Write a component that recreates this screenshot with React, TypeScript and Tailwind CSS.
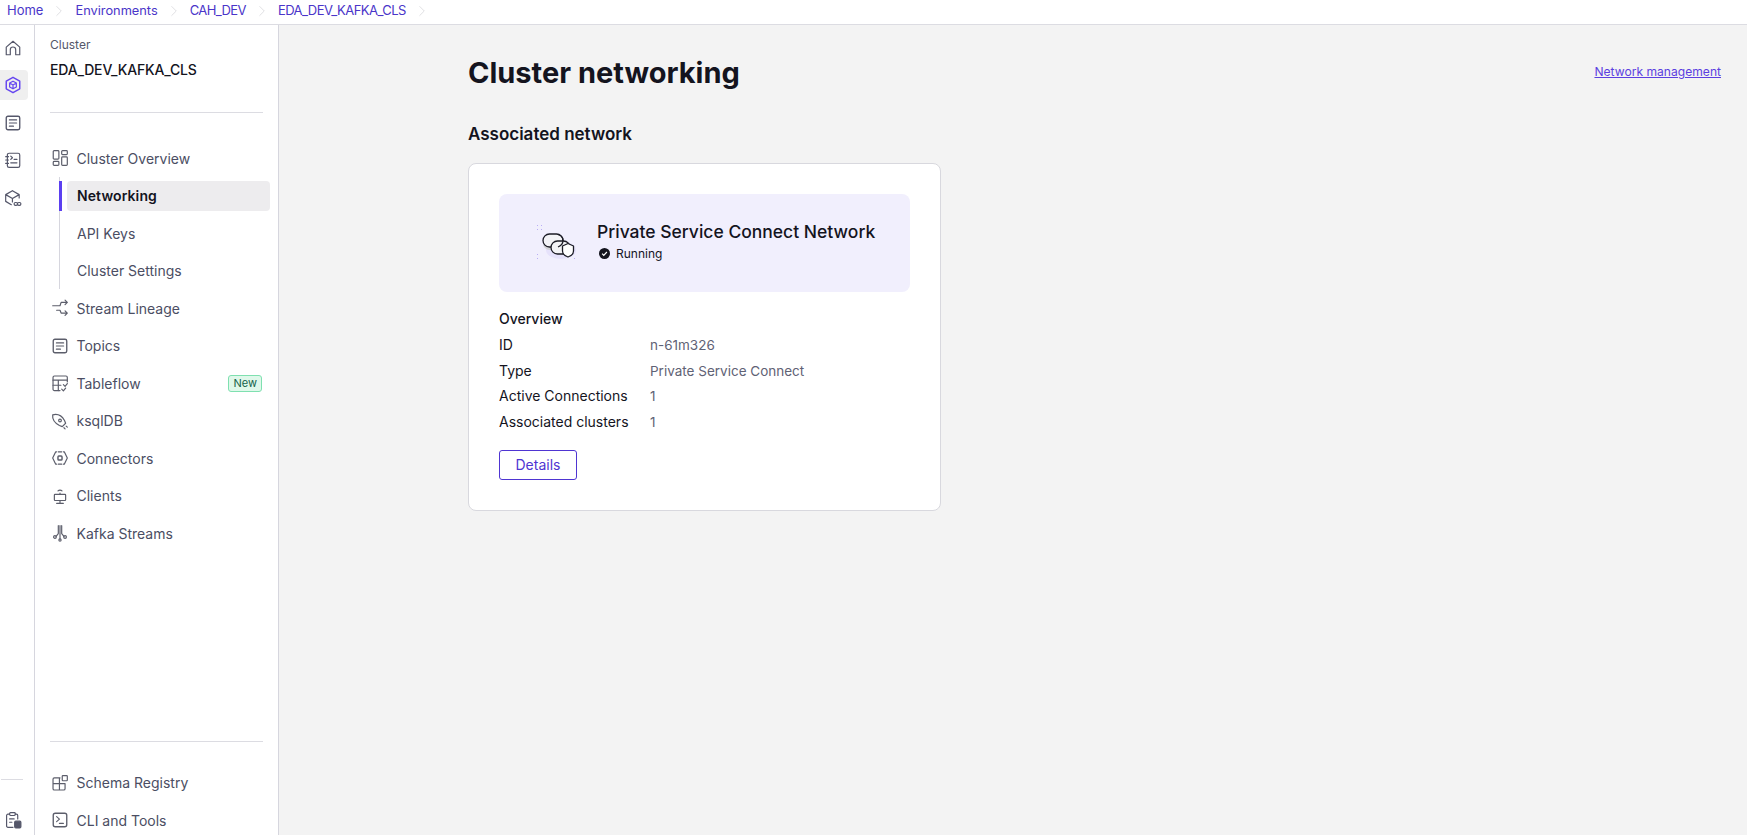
import { ChevronRight } from 'lucide-react';
import type { ReactNode } from 'react';

const Icon = ({ children }: { children: ReactNode }) => (
  <svg viewBox="0 0 16 16" fill="none" stroke="currentColor" strokeWidth="1.05" strokeLinecap="round" strokeLinejoin="round" className="h-[18px] w-[18px]">
    {children}
  </svg>
);

const icons = {
  home: <path d="M2 7.2 8 2l6 5.2V14h-3.6V9.5a2.4 2.4 0 0 0-4.8 0V14H2z" />,
  cluster: (
    <>
      <path d="M8 1.200 14 4.600v6.800L8 14.800 2 11.400V4.600z" strokeWidth="1.300" />
      <path d="M8 4.600 11 6.300v3.400L8 11.400 5 9.700V6.300zM5 6.300 8 8l3-1.700M8 8v3.400" />
    </>
  ),
  doc: (
    <>
      <rect x="2" y="2" width="12" height="12" rx="1.500" strokeWidth="1.200" />
      <path d="M4.800 5.300h6.400M4.800 8h6.400M4.800 10.800h3.600" />
    </>
  ),
  notebook: (
    <>
      <rect x="3" y="2" width="11" height="12.500" rx="1.500" />
      <path d="M1.500 5h2.500M1.500 8h2.500M1.500 11h2.500M6 4.500 7.500 6 6 7.500M6 10.500h5.500M9 7.500h2.500" />
    </>
  ),
  boxLink: (
    <>
      <path d="M7.500 1.500 13.500 5v3M7.500 1.500 1.500 5v6l5 3M1.500 5l6 3.500L13.500 5M7.500 8.500v3" />
      <rect x="9" y="12" width="3" height="2.500" rx="1.200" />
      <rect x="12" y="12" width="3" height="2.500" rx="1.200" />
    </>
  ),
  overview: (
    <>
      <rect x="2" y="1.500" width="5" height="7.500" rx="0.800" />
      <rect x="2" y="11" width="5" height="3.500" rx="0.800" />
      <rect x="9.500" y="1.500" width="5" height="3.500" rx="0.800" />
      <rect x="9.500" y="7" width="5" height="7.500" rx="0.800" />
    </>
  ),
  lineage: (
    <>
      <path d="M1.500 6h6.500l1-3h5.500M12.500 1l2 2-2 2" />
      <path d="M5 10h3l1 2.500h5.500M12.500 10.500l2 2-2 2" />
    </>
  ),
  table: (
    <>
      <path d="M14.500 7V3a1.200 1.200 0 0 0-1.200-1.200H3A1.200 1.200 0 0 0 1.800 3v10.500A1.200 1.200 0 0 0 3 14.700h5" />
      <path d="M1.800 5.500h12.700M1.800 10h7M6.500 5.500v9.200M9.500 13.500l1.500 1.500 2-2.500M11 9.500l1.500 1.500 2-2.500" />
    </>
  ),
  rocket: (
    <>
      <path d="M1.500 2.500c4-1 8 .5 10.500 5l1 2.500-3 3-2.500-1C3 9.500 1 6.500 1.500 2.500z" />
      <circle cx="8" cy="7.500" r="1.200" />
      <path d="M13.500 12.500l1 1M11.500 14l1 1" />
    </>
  ),
  connector: (
    <>
      <path d="M5 2.500H4.200L1.500 8l2.700 5.500H5M11 2.500h.800L14.500 8l-2.700 5.500H11M6.500 2.500h3M6.500 13.500h3" />
      <rect x="6.200" y="6.200" width="3.600" height="3.600" rx="0.800" strokeWidth="1.300" />
    </>
  ),
  client: (
    <>
      <rect x="3" y="6.500" width="10" height="5.500" rx="0.600" />
      <path d="M8 12v2.500M5 14.500h6M6.200 3.500a2.500 2.500 0 0 1 3.600 0M8 5.500v1" />
    </>
  ),
  streams: (
    <>
      <path d="M6.500 1.500v7L4.500 11M8 1.500V13M9.500 1.500v7l2 2.500" />
      <circle cx="3.500" cy="11.500" r="1.200" />
      <circle cx="12.500" cy="11.500" r="1.200" />
      <circle cx="8" cy="14.200" r="1" />
    </>
  ),
  schema: (
    <>
      <path d="M8 3.500H3A1.200 1.200 0 0 0 1.800 4.700V13A1.200 1.200 0 0 0 3 14.200h8.300a1.200 1.200 0 0 0 1.200-1.200V8.500H1.800M7.500 3.500v10.700" />
      <rect x="10" y="1.500" width="4.500" height="4.500" rx="0.600" />
    </>
  ),
  cli: (
    <>
      <rect x="2" y="2" width="12" height="12" rx="1.800" strokeWidth="1.200" />
      <path d="M5 5l2.500 2.200L5 9.400M7.500 11h3.500" />
    </>
  ),
  clipboard: (
    <>
      <path d="M8 14.500H3.500A1.200 1.200 0 0 1 2.300 13.300V4A1.200 1.200 0 0 1 3.500 2.800H5M10 2.800h1A1.200 1.200 0 0 1 12.200 4v3" />
      <rect x="5" y="1.500" width="5" height="2.500" rx="0.800" />
      <path d="M5 7h4M5 10h2" />
      <rect x="9.500" y="9" width="5.500" height="6" rx="1" fill="currentColor" />
    </>
  ),
};

function NavRow({ icon, label, badge }: { icon: ReactNode; label: string; badge?: string }) {
  return (
    <div className="flex h-[30px] items-center text-[14px] text-[#4b4e63]">
      <span className="flex w-[26.5px] pl-[0.5px] text-[#5c5e6b]">
        <Icon>{icon}</Icon>
      </span>
      <span>{label}</span>
      {badge && (
        <span className="ml-auto mr-[1px] rounded-[3px] border border-[#7fe0b0] bg-[#dff8ea] px-[4px] text-[11px] leading-[15px] text-[#14634a]">
          {badge}
        </span>
      )}
    </div>
  );
}

const crumbs = [
  { label: 'Home', cls: 'text-[13px]' },
  { label: 'Environments', cls: 'text-[12.8px]' },
  { label: 'CAH_DEV', cls: 'text-[13px] tracking-[-0.6px]' },
  { label: 'EDA_DEV_KAFKA_CLS', cls: 'text-[13px] tracking-[-0.55px]' },
];

const railIcons = [icons.home, icons.cluster, icons.doc, icons.notebook, icons.boxLink];

const overview = [
  ['ID', 'n-61m326'],
  ['Type', 'Private Service Connect'],
  ['Active Connections', '1'],
  ['Associated clusters', '1'],
];

export default function App() {
  return (
    <div className="flex h-[835px] w-full flex-col overflow-hidden bg-white font-['Inter',sans-serif]">
      <nav className="flex h-[25px] shrink-0 items-center border-b border-[#dcdce2] pb-[2px] pl-[7px] text-[#4a35c9]">
        {crumbs.map((c) => (
          <div key={c.label} className="flex items-center">
            <span className={c.cls}>{c.label}</span>
            <ChevronRight className="mx-[7px] h-[18px] w-[18px] text-[#dcdce0]" strokeWidth={1.2} />
          </div>
        ))}
      </nav>

      <div className="flex min-h-0 flex-1">
        {/* icon rail */}
        <aside className="flex w-[35px] shrink-0 flex-col border-r border-[#d6d6de] text-[#55576a]">
          <div className="flex flex-col gap-[7.5px] pt-[7.5px]">
            {railIcons.map((ic, i) => (
              <div key={i} className={`flex h-[30px] w-[28px] items-center justify-center rounded-r-[4px] pr-[3px] ${i === 1 ? 'bg-[#efefef] text-[#6647f0]' : ''}`}>
                <Icon>{ic}</Icon>
              </div>
            ))}
          </div>
          <div className="mt-auto">
            <div className="ml-[1px] h-px w-[22px] bg-[#dcdce2]" />
            <div className="mt-[25px] flex h-[30px] w-[25px] items-center justify-center">
              <Icon>{icons.clipboard}</Icon>
            </div>
          </div>
        </aside>

        {/* cluster sidebar */}
        <aside className="flex w-[244px] shrink-0 flex-col border-r border-[#d6d6de] px-[15px]">
          <div className="pt-[12px] text-[12px] leading-[16px] text-[#55576a]">Cluster</div>
          <div className="mt-[7px] text-[14px] font-medium leading-[20px] tracking-[-0.18px] text-[#14141e]">EDA_DEV_KAFKA_CLS</div>
          <div className="mt-[32px] h-px bg-[#dcdce2]" />

          <div className="mt-[30px] flex flex-col gap-[7.5px]">
            <NavRow icon={icons.overview} label="Cluster Overview" />
            <div className="relative -mb-[3.5px] -mr-[7px] ml-[9px] -mt-[3.5px] flex flex-col gap-[7.5px] border-l border-[#d6d6de] py-[3.5px] pl-[7px]">
              <div className="absolute left-[-1px] top-[3.5px] h-[30px] w-[3px] bg-[#5b3ff0]" />
              <div className="flex h-[30px] items-center rounded-[4px] bg-[#edecee] pl-[10px] text-[14px] font-semibold tracking-[0.1px] text-[#14141e]">Networking</div>
              <div className="flex h-[30px] items-center pl-[10px] text-[14px] text-[#4b4e63]">API Keys</div>
              <div className="flex h-[30px] items-center pl-[10px] text-[14px] text-[#4b4e63]">Cluster Settings</div>
            </div>
            <NavRow icon={icons.lineage} label="Stream Lineage" />
            <NavRow icon={icons.doc} label="Topics" />
            <NavRow icon={icons.table} label="Tableflow" badge="New" />
            <NavRow icon={icons.rocket} label="ksqlDB" />
            <NavRow icon={icons.connector} label="Connectors" />
            <NavRow icon={icons.client} label="Clients" />
            <NavRow icon={icons.streams} label="Kafka Streams" />
          </div>

          <div className="mt-auto">
            <div className="h-px bg-[#dcdce2]" />
            <div className="mt-[26px] flex flex-col gap-[7.5px]">
              <NavRow icon={icons.schema} label="Schema Registry" />
              <NavRow icon={icons.cli} label="CLI and Tools" />
            </div>
          </div>
        </aside>

        {/* main */}
        <main className="min-w-0 flex-1 bg-[#f3f3f3] pl-[189px] pr-[26px]">
          <div className="flex items-center justify-between pt-[28px]">
            <h1 className="text-[29px] font-bold leading-[40px] text-[#14141e]">Cluster networking</h1>
            <a className="-translate-y-px text-[12.1px] text-[#5b3fe0] underline">Network management</a>
          </div>

          <h2 className="mt-[29px] text-[17px] font-semibold leading-[24px] text-[#14141e]">Associated network</h2>

          <section className="mt-[17px] w-[473px] rounded-[8px] border border-[#d8d8de] bg-white px-[30px] pb-[30px] pt-[30px]">
            <div className="flex h-[98px] items-center rounded-[8px] bg-[#f1effd] pl-[34px]">
              <svg viewBox="0 0 44 40" className="h-[40px] w-[44px]" fill="none">
                <ellipse cx="28" cy="27" rx="15" ry="9" fill="#e6e2fb" />
                <g fill="#b9adf5">
                  <rect x="4" y="2" width="1" height="1" />
                  <rect x="8" y="2" width="1" height="1" />
                  <rect x="4" y="6" width="1" height="1" />
                  <rect x="8" y="6" width="1" height="1" />
                  <rect x="4" y="31" width="1" height="1" />
                  <rect x="4" y="35" width="1" height="1" />
                  <rect x="41" y="35" width="1" height="1" />
                </g>
                <rect x="10" y="14" width="20" height="13" rx="6.5" fill="#d2d2d6" />
                <rect x="10" y="11" width="20" height="13" rx="6.5" fill="#f3f3f6" stroke="#1c1c26" strokeWidth="1.3" />
                <rect x="18" y="18" width="19" height="13" rx="6.5" fill="#f3f3f6" stroke="#1c1c26" strokeWidth="1.3" />
                <path d="M25 11.500c3.500 1 5 3 5 6s-1.500 5-5 6.500" stroke="#1c1c26" strokeWidth="1.3" />
                <path d="M29.500 23l5.500-2.500 5.500 2.500v5c0 3-2.500 5-5.500 6-3-1-5.500-3-5.500-6z" fill="#fff" stroke="#1c1c26" strokeWidth="1.3" strokeLinejoin="round" />
              </svg>
              <div className="ml-[20px] -mt-[5px]">
                <div className="text-[17.5px] font-medium leading-[24px] text-[#14141e]">Private Service Connect Network</div>
                <div className="mt-[2px] flex items-center pl-[2px] text-[12px] leading-[16px] text-[#14141e]">
                  <svg viewBox="0 0 12 12" className="mr-[6px] h-[11px] w-[11px]">
                    <circle cx="6" cy="6" r="6" fill="#14141e" />
                    <path d="M3.400 6.200 5.200 8l3.400-3.600" stroke="#fff" strokeWidth="1.300" fill="none" />
                  </svg>
                  Running
                </div>
              </div>
            </div>

            <div className="mt-[17px] text-[14px] font-medium leading-[20px] text-[#14141e]">Overview</div>
            <dl className="mt-[6px] flex flex-col gap-[5.5px]">
              {overview.map(([k, v]) => (
                <div key={k} className="flex text-[14px] leading-[20px]">
                  <dt className="w-[151px] text-[#14141e]">{k}</dt>
                  <dd className="text-[13.5px] text-[#5f6275]">{v}</dd>
                </div>
              ))}
            </dl>

            <button className="mt-[18px] block h-[30px] w-[78px] rounded-[3px] border border-[#4f35d2] text-[14px] text-[#4f35d2]">Details</button>
          </section>
        </main>
      </div>
    </div>
  );
}
